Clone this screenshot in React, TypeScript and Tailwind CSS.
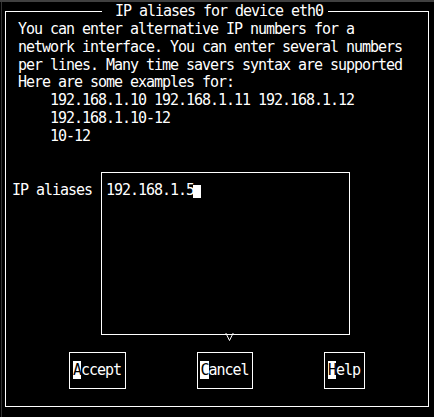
import React from "react";

const mono = "font-['DejaVu_Sans_Mono',monospace] text-[15px] tracking-[-1.03px] leading-[17.8px]";

const helpLines = [
  "You can enter alternative IP numbers for a",
  "network interface. You can enter several numbers",
  "per lines. Many time savers syntax are supported",
  "Here are some examples for:",
  "    192.168.1.10 192.168.1.11 192.168.1.12",
  "    192.168.1.10-12",
  "    10-12",
];

function Button({ hot, rest, width }: { hot: string; rest: string; width: string }) {
  return (
    <div className={`flex h-[37px] items-center justify-center border border-white ${width}`}>
      <span className="whitespace-pre leading-[18px]">
        <span className="inline-block h-[18px] bg-white text-black">{hot}</span>
        {rest}
      </span>
    </div>
  );
}

export default function App() {
  return (
    <div className={`h-[417px] w-[434px] overflow-hidden border-t-2 border-t-[#404040] bg-black text-white ${mono}`}>
      <div className="ml-[1px] h-full border-l border-l-[#333] pl-[3px]">
        {/* title row */}
        <div className="flex h-[18px] w-[424px] items-center">
          <div className="h-[9px] w-[97px] self-end border-l border-t border-white" />
          <span className="ml-[13px] mr-[5px] pt-[2px] whitespace-pre">IP aliases for device eth0</span>
          <div className="h-[9px] flex-1 self-end border-r border-t border-white" />
        </div>

        {/* frame body */}
        <div className="flex h-[387px] w-[424px] flex-col border-x border-b border-white">
          <div className="pl-[12px] pt-[1px]">
            {helpLines.map((l, i) => (
              <div key={i} className="h-[17.8px] whitespace-pre">
                {l}
              </div>
            ))}
          </div>

          <div className="mt-[26.4px] flex">
            <div className="ml-[6px] w-[89px] pt-[10px] whitespace-pre">IP aliases</div>
            <div className="relative h-[163px] w-[249px] border border-white pl-[4px] pt-[9px]">
              <span className="whitespace-pre">192.168.1.5</span>
              <span className="ml-[-1px] inline-block h-[13px] w-[8px] bg-white align-[-3px]" />
              <svg className="absolute left-[123px] top-[160px]" width="9" height="8" viewBox="0 0 9 8">
                <path d="M0.8 0 L4.5 7.5 L8.2 0" fill="none" stroke="white" strokeWidth="1" />
              </svg>
            </div>
          </div>

          <div className="mt-[17px] flex justify-center gap-[71px] pr-[1px]">
            <Button hot="A" rest="ccept" width="w-[57px]" />
            <Button hot="C" rest="ancel" width="w-[56px]" />
            <Button hot="H" rest="elp" width="w-[41px]" />
          </div>
        </div>
      </div>
    </div>
  );
}
